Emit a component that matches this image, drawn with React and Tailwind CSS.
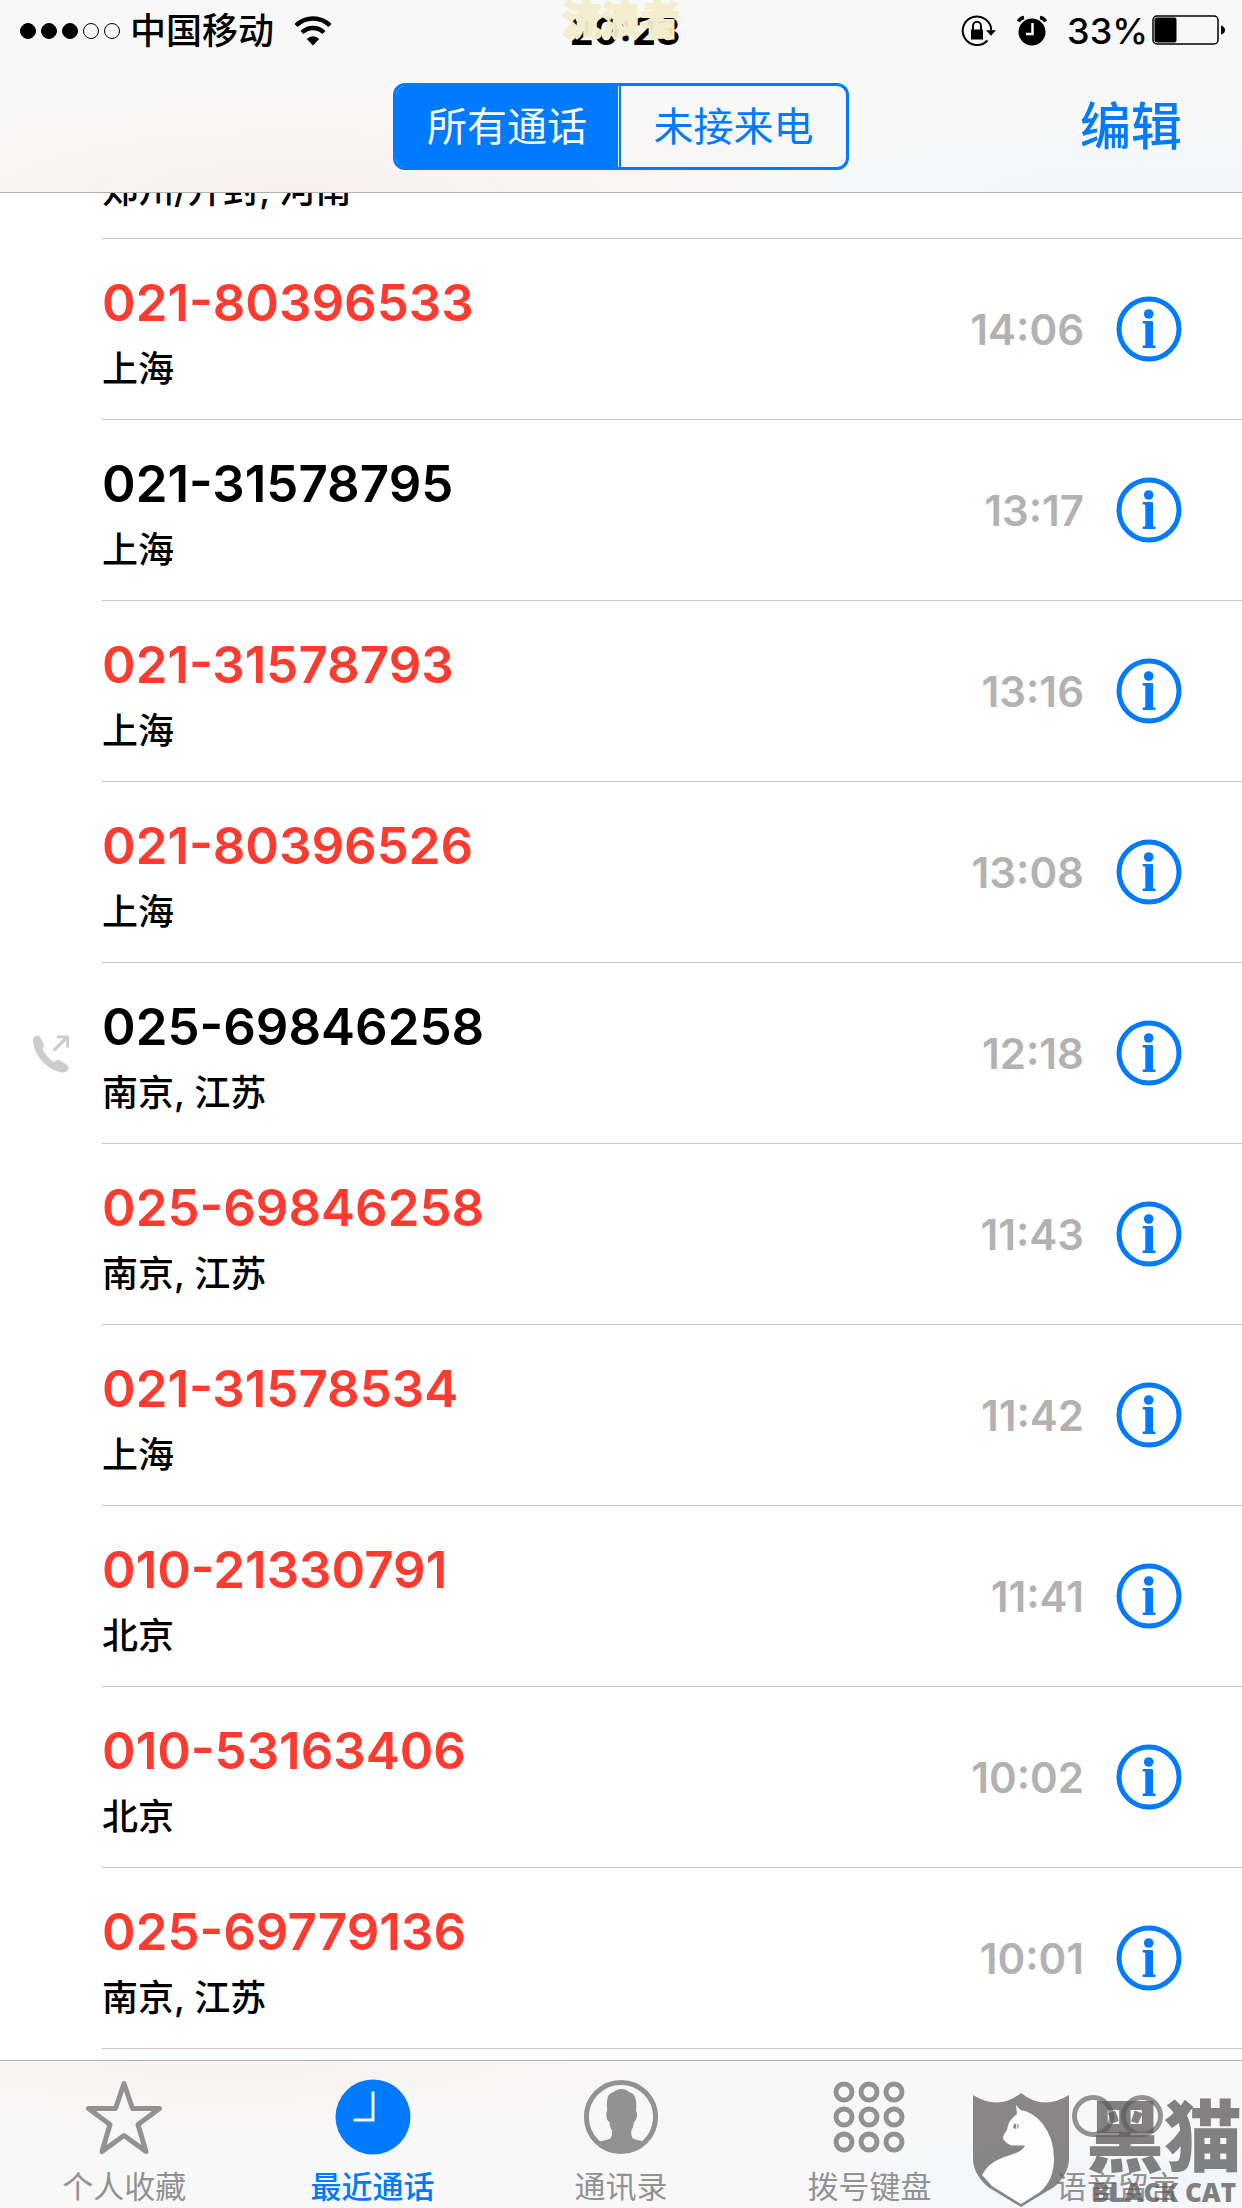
const calls = [
  ["021-80396533", "上海", "14:06", true],
  ["021-31578795", "上海", "13:17", false],
  ["021-31578793", "上海", "13:16", true],
  ["021-80396526", "上海", "13:08", true],
  ["025-69846258", "南京, 江苏", "12:18", false, true],
  ["025-69846258", "南京, 江苏", "11:43", true],
  ["021-31578534", "上海", "11:42", true],
  ["010-21330791", "北京", "11:41", true],
  ["010-53163406", "北京", "10:02", true],
  ["025-69779136", "南京, 江苏", "10:01", true],
];

function WifiIcon() {
  return (
    <svg width="38" height="34" viewBox="0 0 38 34" fill="none" aria-hidden="true">
      <path d="M2 11.500a24 24 0 0 1 34 0" stroke="#000" strokeWidth="4.400" />
      <path d="M8 18.500a15.600 15.600 0 0 1 22 0" stroke="#000" strokeWidth="4.400" />
      <path d="M19 31.500l-6.200-6.500a8.600 8.600 0 0 1 12.400 0z" fill="#000" />
    </svg>
  );
}

function RotationLockIcon() {
  return (
    <svg width="36" height="36" viewBox="0 0 36 36" fill="none" aria-hidden="true">
      <path d="M30.300 17.500A14.300 14.300 0 1 0 26.500 27.500" stroke="#000" strokeWidth="2" />
      <path d="M25 17.200h10l-5 5.500z" fill="#000" />
      <path d="M10 16.500h12v10H10z" fill="#000" />
      <path d="M12 17v-4a4 4.200 0 0 1 8 0V17" stroke="#000" strokeWidth="2" />
    </svg>
  );
}

function AlarmIcon() {
  return (
    <svg width="30" height="34" viewBox="0 0 30 34" fill="none" aria-hidden="true">
      <circle cx="15" cy="18" r="13.500" fill="#000" />
      <path d="M1.500 7.500Q3 4 7 3.500M28.500 7.500Q27 4 23 3.500" stroke="#000" strokeWidth="3.500" />
      <path d="M15.500 9v11H9" stroke="#fff" strokeWidth="2.500" />
    </svg>
  );
}

function BatteryIcon() {
  return (
    <svg width="74" height="32" viewBox="0 0 74 32" fill="none" aria-hidden="true">
      <rect x="1" y="1" width="65" height="28" rx="4" stroke="#000" strokeWidth="1.500" />
      <rect x="2.500" y="2.500" width="22" height="25" rx="2" fill="#000" />
      <path d="M69 10.500q4 1 4 4.500t-4 4.500z" fill="#000" />
    </svg>
  );
}

function InfoIcon() {
  return (
    <svg width="66" height="66" viewBox="0 0 66 66" fill="none" aria-hidden="true">
      <circle cx="33" cy="33" r="30" stroke="#007aff" strokeWidth="5" />
      <circle cx="32.700" cy="18" r="4.800" fill="#007aff" />
      <path d="M27.500 25H36q1 0 1 1v23q0 .500.500.500h1.300q.900 0 .900 1.200t-.900 1.300H27.500q-1 0-1-1.300t1-1.200h1q.800 0 .800-.800V28.500q0-1-.800-1h-1q-1 0-1-1.200t1-1.300z" fill="#007aff" />
    </svg>
  );
}

function OutgoingIcon() {
  return (
    <svg width="38" height="38" viewBox="0 0 38 38" fill="#ccc" aria-hidden="true">
      <path d="M3 1.200Q6-.500 8 2.200l3.600 6.300q1 2-.300 3.800-1 1.400-.200 2.900 3.600 6.800 9.700 11 1.400.900 2.800-.100 2.400-2 4.700-.500l7 4.600q2.300 1.700 1 4.300-2 3.600-6.300 2.900C14.800 35 1.900 19.500 1 6.200Q.800 2.700 3 1.200z" />
      <path d="M25 .500h12v12h-2.800V5.300L22.700 16.800l-2.200-2.200L31.800 3.300H25z" />
    </svg>
  );
}

function StarIcon() {
  return (
    <svg width="80" height="76" viewBox="0 0 80 76" fill="none" aria-hidden="true">
      <path d="M40 4.500 48.500 29.500H75.500L54 45.500 62 72.500 40 56.500 18 72.500 26 45.500 4.500 29.500H31.500z" stroke="#929292" strokeWidth="5" strokeLinejoin="round" />
    </svg>
  );
}

function ClockIcon() {
  return (
    <svg width="76" height="76" viewBox="0 0 76 76" fill="none" aria-hidden="true">
      <circle cx="38" cy="38" r="37.500" fill="#007aff" />
      <path d="M38 12.500V41H18.500" stroke="#f8f6f6" strokeWidth="3" />
    </svg>
  );
}

function ContactIcon() {
  return (
    <svg width="76" height="76" viewBox="0 0 76 76" fill="none" aria-hidden="true">
      <circle cx="38" cy="38" r="34.600" stroke="#929292" strokeWidth="5" />
      <path d="M15 63q8-2 11.500-3 3-1 2.500-8.500-2.200-3-2.700-8.500-2.600-1.500-3-7-.200-3 .900-4.500-1.300-12 2.300-16.500 5-2.500 7-3.800 4.500-2.200 10 0 3 2.200 6 3.300 5 4 3.500 17 1.200 1.500 1 4.500-.400 5.500-3 7-.500 5.500-2.700 8.500-.500 7.500 2.500 8.500 3.500 1 11 3Q51 74 38 74T15 63z" fill="#929292" />
    </svg>
  );
}

function KeypadIcon() {
  return (
    <svg width="76" height="76" viewBox="0 0 76 76" fill="none" stroke="#929292" strokeWidth="5" aria-hidden="true">
      {[13, 38, 63].map((y) => [13, 38, 63].map((x) => <circle key={x + "-" + y} cx={x} cy={y} r="8" />))}
    </svg>
  );
}

function VoicemailIcon() {
  return (
    <svg width="94" height="76" viewBox="0 0 94 76" fill="none" stroke="#929292" strokeWidth="5" aria-hidden="true">
      <circle cx="22" cy="37" r="18.500" />
      <circle cx="71" cy="37" r="18.500" />
      <path d="M22 55.500H71" />
    </svg>
  );
}

const tabs = [
  ["个人收藏", StarIcon],
  ["最近通话", ClockIcon],
  ["通讯录", ContactIcon],
  ["拨号键盘", KeypadIcon],
  ["语音留言", VoicemailIcon],
];

function Watermark() {
  return (
    <div className="pointer-events-none absolute bottom-0 right-0 flex items-end opacity-75">
      <svg width="98" height="116" viewBox="0 0 98 116" aria-hidden="true">
        <path d="M1 3Q27 19 49 1 71 19 97 3V66Q97 82 82 95L49 115 16 95Q1 82 1 66z" fill="#636162" />
        <path d="M44 13 48.500 18Q61 20 70 31 82 46 82 67 82 88 68 100L49 112 20 94 10 83Q16 71 31 65.500L44 61Q51 58 53 53.500H40Q34 52 31 46.500 31 43 35 38 36 28 45 22z" fill="#fff" />
        <path d="M41 35q1-4 3.500-3.500-1 3 0 5-3 1-3.500-1.500zm4-3q3 1.500.500 5z" fill="#636162" />
      </svg>
      <div className="ml-4 flex w-[156px] flex-col items-center text-[#5b595a]">
        <span className="mb-1 font-['Noto_Sans_CJK_SC',sans-serif] text-[78px] font-black leading-[80px]">黑猫</span>
        <span className="whitespace-nowrap font-['Open_Sans',sans-serif] text-[26px] font-extrabold leading-[32px]">BLACK CAT</span>
      </div>
    </div>
  );
}

export default function App() {
  return (
    <div className="relative flex h-screen flex-col overflow-hidden bg-white font-[Inter,'Noto_Sans_CJK_SC',sans-serif] text-black">
      <header className="shrink-0 border-b border-[#b2b2b2] bg-[#f8f8f8] bg-[radial-gradient(ellipse_at_24%_100%,#faeff0_0%,#f8f4f3_18%,transparent_40%),radial-gradient(ellipse_at_92%_100%,#f1f5f9_0%,transparent_25%)]">
        <div className="relative flex h-[62px] items-center justify-between pl-5 pr-4 text-[36px] font-medium">
          <div className="flex items-center">
            <div className="flex gap-[5px]">
              {[1, 1, 1, 0, 0].map((on, i) => (
                <span key={i} className={on ? "size-4 rounded-full border border-black bg-black" : "size-4 rounded-full border border-black"} />
              ))}
            </div>
            <span className="ml-2.5 mr-5">中国移动</span>
            <WifiIcon />
          </div>
          <span className="absolute left-1/2 ml-1 -translate-x-1/2 text-[38px] font-bold">20:23</span>
          <span className="absolute -top-2 left-1/2 -translate-x-1/2 whitespace-nowrap text-[39px] font-black leading-[56px] text-[#f3eecb]/95 [-webkit-text-stroke:2px_#f3eecb]">流浪者</span>
          <div className="flex items-center">
            <RotationLockIcon />
            <span className="mx-5"><AlarmIcon /></span>
            <span className="mr-1">33%</span>
            <BatteryIcon />
          </div>
        </div>
        <nav className="grid h-[130px] grid-cols-[1fr_456px_1fr] items-start pt-[21px] text-[#007aff]">
          <div className="col-start-2 grid h-[87px] grid-cols-[222px_1fr] overflow-hidden rounded-xl border-3 border-[#007aff] text-[40px]">
            <button type="button" aria-pressed="true" className="bg-[#007aff] text-[#f9f9f9]">所有通话</button>
            <button type="button" aria-pressed="false" className="ml-px border-l-2 border-[#007aff]">未接来电</button>
          </div>
          <button type="button" className="mr-15 h-[87px] justify-self-end pt-0.5 text-[51px] font-medium">编辑</button>
        </nav>
      </header>

      <main className="flex min-h-0 flex-1 flex-col justify-end overflow-hidden pb-[11px]">
        <ul>
          <li className="ml-[102px] flex h-[181px] flex-col justify-end border-b border-[#c8c7cc] pb-[26px] text-[36px] font-medium leading-[44px]">郑州/开封, 河南</li>
          {calls.map(([number, place, time, missed, outgoing]) => (
            <li key={number + time} className="flex h-[181px]">
              <div className="flex w-[102px] shrink-0 items-center pl-8">{outgoing && <OutgoingIcon />}</div>
              <div className="flex flex-1 items-center border-b border-[#c8c7cc] pr-15">
                <div className="flex-1 pt-3.5">
                  <p className={missed ? "text-[51px] font-semibold leading-[66px] text-[#ff3b30]" : "text-[51px] font-semibold leading-[66px]"}>{number}</p>
                  <p className="text-[36px] font-medium leading-[66px]">{place}</p>
                </div>
                <time className="mr-8 text-[42px] font-semibold text-[#b2b2b2]">{time}</time>
                <button type="button" aria-label="通话详情"><InfoIcon /></button>
              </div>
            </li>
          ))}
        </ul>
      </main>

      <footer className="relative shrink-0 border-t border-[#b2b2b2] bg-[#f8f8f8] bg-[radial-gradient(ellipse_at_18%_0%,#f8f2f2_0%,transparent_40%),radial-gradient(ellipse_at_92%_80%,#f1f5f9_0%,transparent_25%)]">
        <div className="grid h-[147px] grid-cols-5">
          {tabs.map(([label, Icon], i) => (
            <button key={label} type="button" className={i === 1 ? "flex flex-col items-center pt-[18px] text-[31px] font-medium leading-[64px] text-[#007aff]" : "flex flex-col items-center pt-[18px] text-[31px] leading-[64px] text-[#929292]"}>
              <Icon />
              <span>{label}</span>
            </button>
          ))}
        </div>
        <Watermark />
      </footer>
    </div>
  );
}
